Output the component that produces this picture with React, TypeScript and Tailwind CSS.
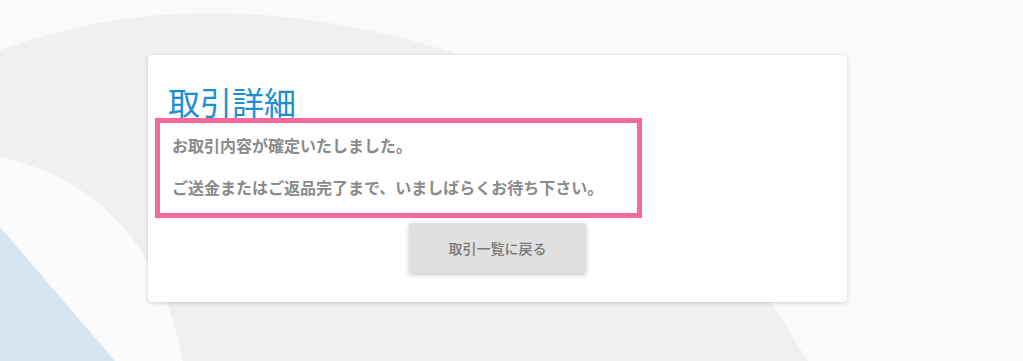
import React from 'react';

const jp = '"Noto Sans CJK JP", "Noto Sans", sans-serif';

function Background() {
  return (
    <svg
      className="absolute inset-0 h-full w-full"
      viewBox="0 0 1023 361"
      preserveAspectRatio="none"
    >
      <rect width="1023" height="361" fill="#fafafa" />
      <path d="M0,50 Q210,-28 470,58 L618,60 L808,361 L0,361 Z" fill="#f0f0f0" />
      <path d="M0,157 Q150,190 183,361 L0,361 Z" fill="#fbfbfb" />
      <path d="M0,227 L115,361 L0,361 Z" fill="#d5e6f2" />
    </svg>
  );
}

export default function App() {
  return (
    <div
      className="relative h-[361px] w-full overflow-hidden"
      style={{ fontFamily: jp }}
    >
      <Background />
      <div className="relative flex pl-[148px] pt-[55px]">
        <div className="flex w-[699px] flex-col rounded-[4px] bg-white pb-[29px] pt-[30px] shadow-[0_1px_4px_rgba(0,0,0,0.18)]">
          <h1 className="pl-[20px] text-[32px] font-normal leading-[33px] text-[#1b8fd6]">
            取引詳細
          </h1>
          <div className="ml-[7px] flex w-[487px] flex-col gap-[18px] border-[5px] border-[#f8699b] px-[12px] pb-[14px] pt-[10px] text-[16px] font-bold leading-[24px] text-[#8a8a8a]">
            <p>お取引内容が確定いたしました。</p>
            <p>ご送金またはご返品完了まで、いましばらくお待ち下さい。</p>
          </div>
          <button className="mt-[5px] h-[50px] w-[177px] self-center rounded-[2px] bg-[#e0e0e0] text-[14px] font-medium text-[#777777] shadow-[0_2px_5px_rgba(0,0,0,0.22)]">
            取引一覧に戻る
          </button>
        </div>
      </div>
    </div>
  );
}
